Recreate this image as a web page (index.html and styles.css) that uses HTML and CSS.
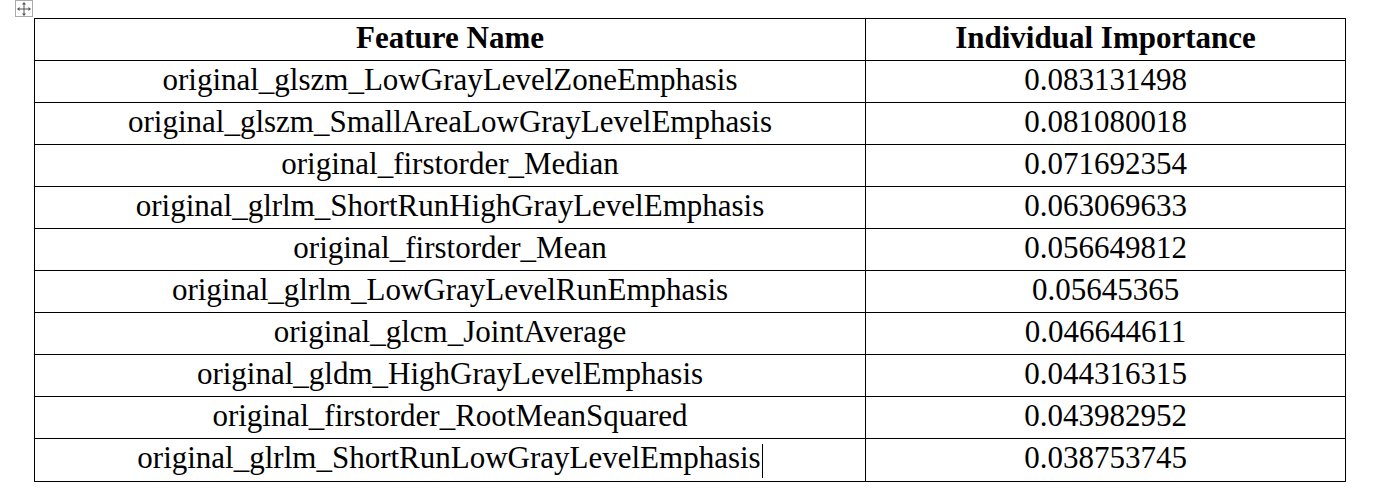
FILE: index.html
```html
<!DOCTYPE html>
<html>
<head>
<meta charset="utf-8">
<link rel="stylesheet" href="styles.css">
</head>
<body>
<div class="page">
  <div class="table-wrap">
    <div class="move-handle">
      <svg width="14" height="14" viewBox="0 0 14 14">
        <g stroke="#555" stroke-width="1" fill="none">
          <line x1="7" y1="1" x2="7" y2="13"/>
          <line x1="1" y1="7" x2="13" y2="7"/>
        </g>
        <g fill="#555">
          <path d="M7 0 L9 2.5 L5 2.5 Z"/>
          <path d="M7 14 L9 11.5 L5 11.5 Z"/>
          <path d="M0 7 L2.5 5 L2.5 9 Z"/>
          <path d="M14 7 L11.5 5 L11.5 9 Z"/>
        </g>
      </svg>
    </div>
    <table class="data">
      <thead>
        <tr><th class="c1">Feature Name</th><th class="c2">Individual Importance</th></tr>
      </thead>
      <tbody>
        <tr><td>original_glszm_LowGrayLevelZoneEmphasis</td><td>0.083131498</td></tr>
        <tr><td>original_glszm_SmallAreaLowGrayLevelEmphasis</td><td>0.081080018</td></tr>
        <tr><td>original_firstorder_Median</td><td>0.071692354</td></tr>
        <tr><td>original_glrlm_ShortRunHighGrayLevelEmphasis</td><td>0.063069633</td></tr>
        <tr><td>original_firstorder_Mean</td><td>0.056649812</td></tr>
        <tr><td>original_glrlm_LowGrayLevelRunEmphasis</td><td>0.05645365</td></tr>
        <tr><td>original_glcm_JointAverage</td><td>0.046644611</td></tr>
        <tr><td>original_gldm_HighGrayLevelEmphasis</td><td>0.044316315</td></tr>
        <tr><td>original_firstorder_RootMeanSquared</td><td>0.043982952</td></tr>
        <tr><td>original_glrlm_ShortRunLowGrayLevelEmphasis<span class="caret"></span></td><td>0.038753745</td></tr>
      </tbody>
    </table>
    <div class="resize-handle"></div>
  </div>
</div>
</body>
</html>
```
FILE: styles.css
```css
html, body {
  margin: 0;
  padding: 0;
  background: #fff;
}
.page {
  padding: 18px 0 0 34px;
}
.table-wrap {
  position: relative;
  width: 1312px;
}
.data {
  border-collapse: collapse;
  width: 1312px;
  table-layout: fixed;
  font-family: "Liberation Serif", "Times New Roman", serif;
  font-size: 31px;
  color: #000;
}
.data th, .data td {
  border: 1px solid #000;
  height: 38px;
  padding: 0 0 3px 0;
  text-align: center;
  vertical-align: middle;
  line-height: 38px;
  white-space: nowrap;
}
.data th {
  font-weight: bold;
}
.c1 { width: 830px; }
.caret {
  display: inline-block;
  width: 1px;
  height: 34px;
  background: #000;
  vertical-align: middle;
  margin-left: 1px;
}
.move-handle {
  position: absolute;
  left: -19px;
  top: -18px;
  width: 16px;
  height: 15px;
  border: 1px solid #aaa;
  background: #fff;
  display: flex;
  align-items: center;
  justify-content: center;
}
.resize-handle {
  position: absolute;
  right: -12px;
  bottom: -12px;
  width: 9px;
  height: 9px;
  border: 1px solid #aaa;
  background: #fff;
}
```
